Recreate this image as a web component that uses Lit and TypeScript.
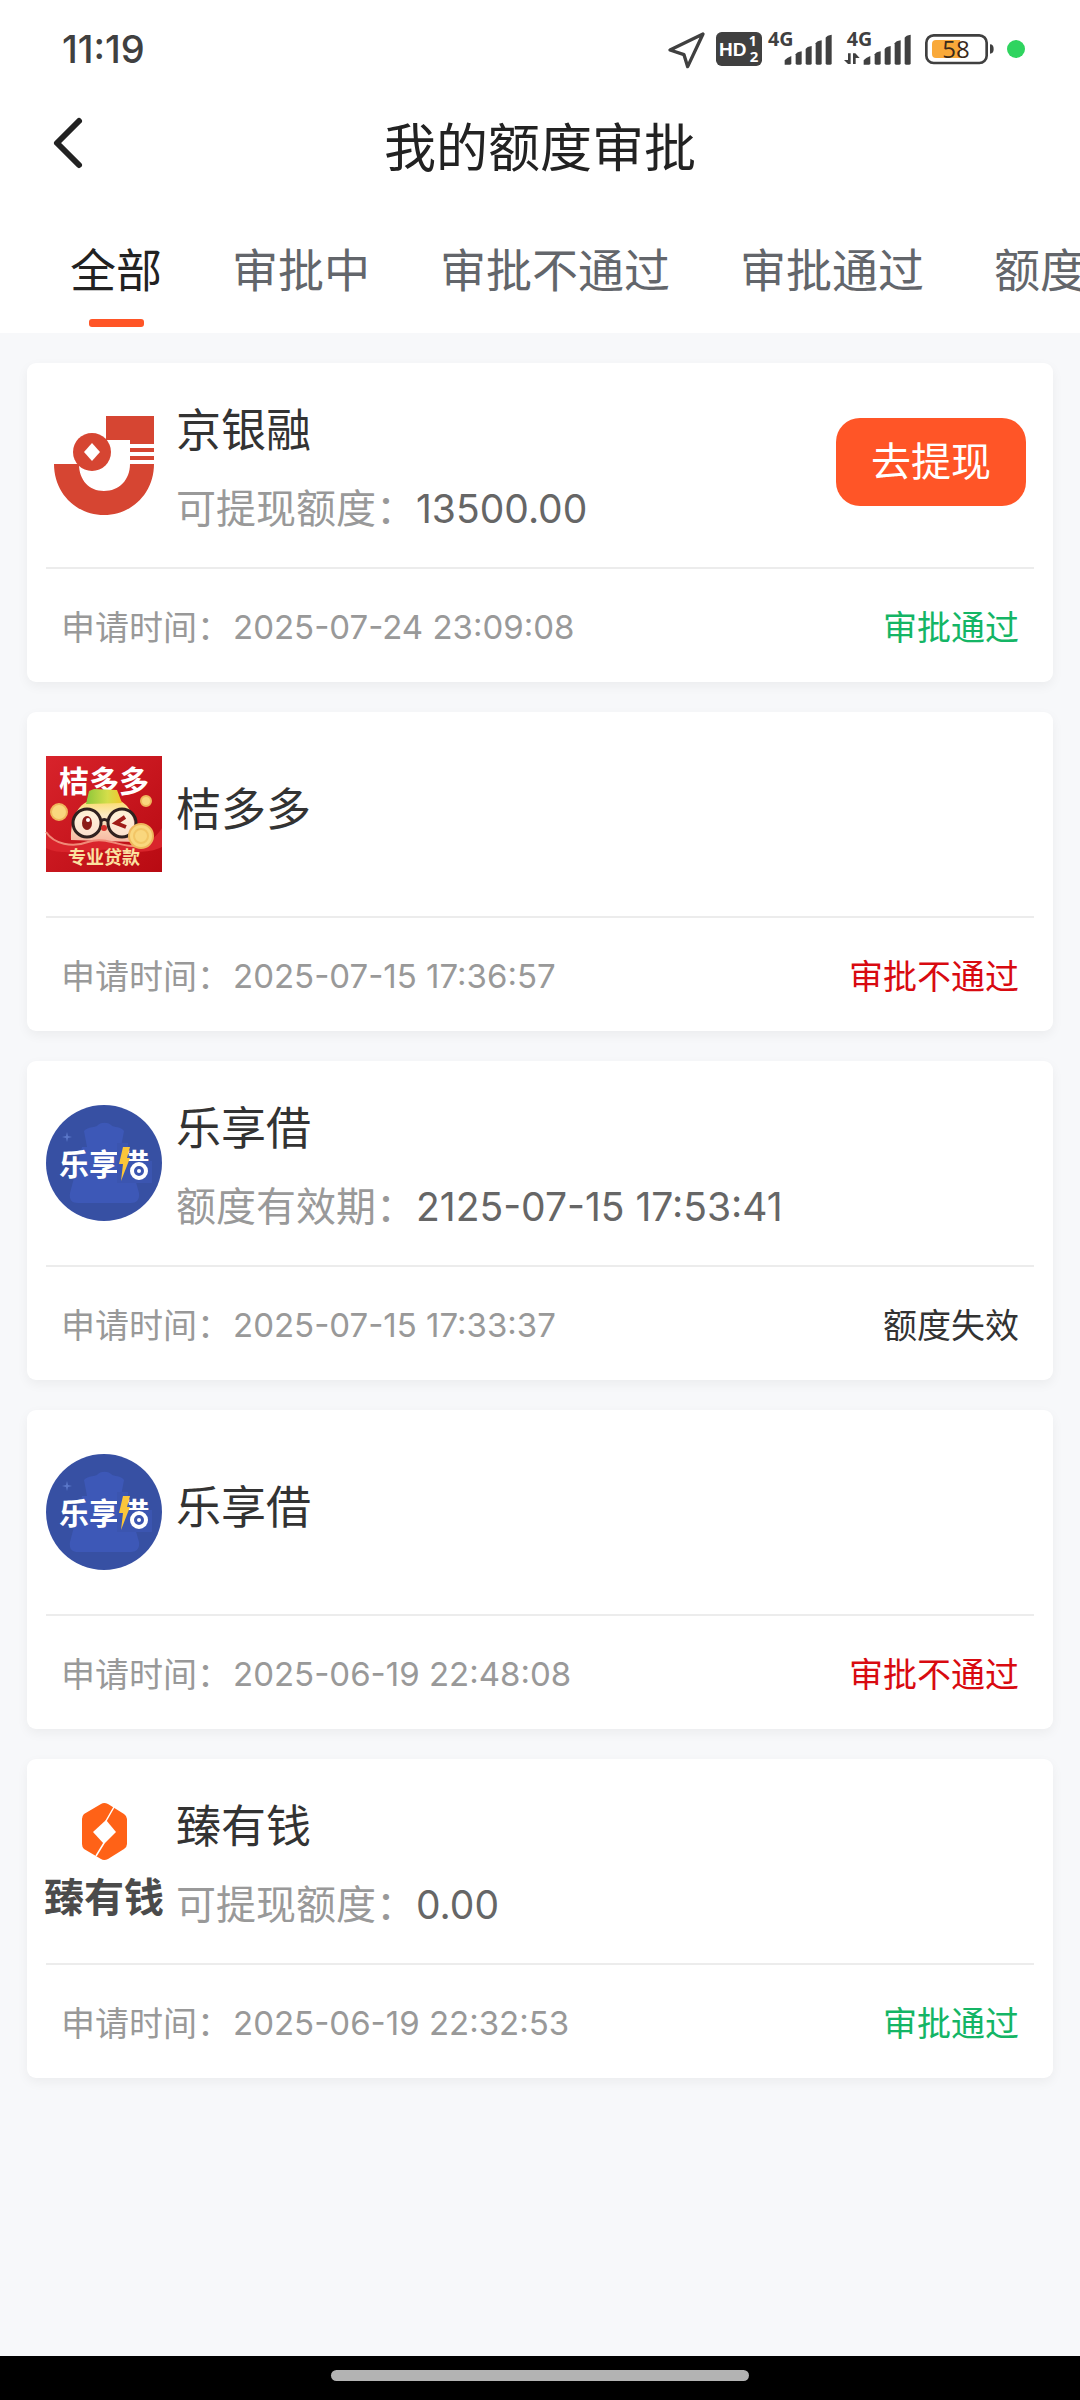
import { LitElement, html, css, svg, nothing } from "lit";
import { customElement, property, state } from "lit/decorators.js";

type Brand = "jingyinrong" | "juduoduo" | "lexiangjie" | "zhenyouqian";
type Tone = "pass" | "reject" | "expired";

interface Application {
  brand: Brand;
  name: string;
  label?: string;
  value?: string;
  appliedAt: string;
  status: string;
  tone: Tone;
  canWithdraw?: boolean;
}

const TABS = ["全部", "审批中", "审批不通过", "审批通过", "额度失效"];

const APPLICATIONS: Application[] = [
  {
    brand: "jingyinrong",
    name: "京银融",
    label: "可提现额度：",
    value: "13500.00",
    appliedAt: "2025-07-24 23:09:08",
    status: "审批通过",
    tone: "pass",
    canWithdraw: true,
  },
  {
    brand: "juduoduo",
    name: "桔多多",
    appliedAt: "2025-07-15 17:36:57",
    status: "审批不通过",
    tone: "reject",
  },
  {
    brand: "lexiangjie",
    name: "乐享借",
    label: "额度有效期：",
    value: "2125-07-15 17:53:41",
    appliedAt: "2025-07-15 17:33:37",
    status: "额度失效",
    tone: "expired",
  },
  {
    brand: "lexiangjie",
    name: "乐享借",
    appliedAt: "2025-06-19 22:48:08",
    status: "审批不通过",
    tone: "reject",
  },
  {
    brand: "zhenyouqian",
    name: "臻有钱",
    label: "可提现额度：",
    value: "0.00",
    appliedAt: "2025-06-19 22:32:53",
    status: "审批通过",
    tone: "pass",
  },
];

const LOGOS = {
  jingyinrong: svg`
    <g fill="#d64532">
      <path d="M60 9H108V37H84V33H60Z" />
      <rect x="84" y="41" width="24" height="4" />
      <rect x="84" y="49" width="24" height="4" />
      <path d="M8 57H33C33 73 43 84 58 84S84 73 84 57H108C108 86 86 108 58 108S8 86 8 57Z" />
      <circle cx="46" cy="45" r="19" />
    </g>
    <path d="M46 36L54 45L46 54L38 45Z" fill="#fff" />
  `,
  juduoduo: svg`
    <defs>
      <linearGradient id="red" x1="0" y1="0" x2="1" y2="1">
        <stop offset="0" stop-color="#d8232b" />
        <stop offset="1" stop-color="#b80a12" />
      </linearGradient>
      <linearGradient id="hat" x1="0" y1="0" x2="1" y2="0">
        <stop offset="0" stop-color="#8dc63a" />
        <stop offset="0.6" stop-color="#d4de4a" />
        <stop offset="1" stop-color="#f3c62f" />
      </linearGradient>
      <linearGradient id="face" x1="0" y1="0" x2="0" y2="1">
        <stop offset="0" stop-color="#fbdc6c" />
        <stop offset="0.35" stop-color="#fdeac4" />
        <stop offset="1" stop-color="#f6b7a2" />
      </linearGradient>
    </defs>
    <rect width="116" height="116" fill="url(#red)" />
    <text class="mark" x="13" y="36" font-size="30" fill="#fff">桔多多</text>
    <path d="M25 84C24 64 32 47 44 45H74C86 50 90 66 89 86Z" fill="url(#face)" />
    <path d="M43 35L48 33L71 34L76 47L40 48Z" fill="url(#hat)" />
    <path d="M0 76C8 88 26 92 42 86C60 80 76 92 92 90C104 88 112 78 116 72V91C96 101 70 92 54 94C34 97 10 98 0 92Z" fill="#d9252c" />
    <path d="M0 76C8 88 26 92 42 86C60 80 76 92 92 90" fill="none" stroke="#f08a78" stroke-width="2" />
    <g fill="#fff3e6" fill-opacity="0.6" stroke="#30211f" stroke-width="3">
      <circle cx="41" cy="67" r="14" />
      <circle cx="76" cy="67" r="14" />
      <path d="M55 65Q58 62 62 65" fill="none" />
    </g>
    <ellipse cx="41" cy="67" rx="5" ry="7" fill="#8c1c18" />
    <circle cx="42" cy="64" r="2" fill="#fff" />
    <path d="M79 61L70 67L80 71" fill="none" stroke="#a01c18" stroke-width="4" />
    <circle cx="58" cy="72" r="3" fill="#d6302a" />
    <g fill="#f9d77e" stroke="#efb75c" stroke-width="2">
      <circle cx="13" cy="56" r="8" />
      <circle cx="100" cy="45" r="5" />
      <circle cx="95" cy="80" r="12" />
    </g>
    <circle cx="95" cy="80" r="7" fill="none" stroke="#f2c666" stroke-width="2" />
    <text class="mark" x="22" y="108" font-size="18" fill="#fbe0a0">专业贷款</text>
  `,
  lexiangjie: svg`
    <circle cx="58" cy="58" r="58" fill="#3750a3" />
    <path d="M38 26C42 21 50 23 52 20C55 17 62 17 65 20C68 23 75 21 78 26L75 42H80L93 88C94 95 90 98 85 98H32C26 98 23 95 24 88L36 42H41Z" fill="#3d58b7" />
    <path d="M21 27L22 31L26 32L22 33L21 37L20 33L16 32L20 31Z" fill="#5b77c9" />
    <text class="mark" x="13" y="70" font-size="30" fill="#fff">乐享借</text>
    <path d="M71 38H82V56H106V78H71Z" fill="#3b55b0" />
    <circle cx="93" cy="66" r="7" fill="none" stroke="#fff" stroke-width="4" />
    <circle cx="93" cy="66" r="2" fill="#fff" />
    <path d="M77 42H84L81 53H84L75 76L77 59H73Z" fill="#fbc63a" />
  `,
  zhenyouqian: svg`
    <path d="M55 1Q58 -1 62 1L78 11Q81 13 81 16V41Q81 44 78 46L62 56Q58 58 55 56L38 46Q36 44 36 41V16Q36 13 38 11Z" fill="#ff6217" />
    <path d="M60 17L70 29L58 41L47 29Z" fill="#fff" />
    <path d="M60 18L68 4M58 40L50 53" stroke="#fff" stroke-width="1.5" />
    <text class="mark" x="-2" y="109" font-size="40" fill="#4b4b4b">臻有钱</text>
  `,
};

@customElement("status-bar")
export class StatusBar extends LitElement {
  static styles = css`
    :host {
      display: flex;
      align-items: center;
      justify-content: space-between;
      height: 98px;
      padding: 0 54px 0 62px;
      background: #fff;
      color: #404040;
    }
    .time {
      font: 500 38px/48px Inter, sans-serif;
    }
    .icons {
      display: flex;
      gap: 6px;
    }
    .icons svg {
      display: block;
      height: 50px;
      overflow: visible;
    }
    text {
      font-family: "Open Sans", "Noto Sans", sans-serif;
    }
    .hd {
      font-family: "Liberation Sans", Arial, sans-serif;
    }
  `;

  private bars(x: number) {
    return svg`
      <path d="M${x} 194V181Q${x + 6} 173 ${x + 20} 168V190Q${x + 20} 194 ${x + 16} 194Z" />
      ${[154, 138, 121, 104].map((top, i) => {
        const l = x + 33 + i * 30;
        return svg`<path d="M${l} 190V${top + 9}Q${l + 4} ${top + 2} ${l + 18} ${top}V190Q${l + 18} 194 ${l + 14} 194H${l + 4}Q${l} 194 ${l} 190Z" />`;
      })}
    `;
  }

  render() {
    return html`
      <span class="time">11:19</span>
      <div class="icons">
        <svg width="42" viewBox="84 72 126 150" aria-hidden="true">
          <path d="M189 102L90 150L132 164L143 200Z" fill="none" stroke="#404040" stroke-width="10" stroke-linejoin="round" />
        </svg>
        <svg width="46" viewBox="228 72 138 150" aria-hidden="true">
          <rect x="228" y="96" width="138" height="102" rx="17" fill="#404040" />
          <text class="hd" x="237" y="168" font-size="57" font-weight="700" fill="#fff">HD</text>
          <text x="326" y="138" font-size="42" font-weight="700" fill="#fff">1</text>
          <text x="329" y="185" font-size="45" font-weight="700" fill="#fff">2</text>
        </svg>
        <svg width="70" viewBox="384 72 210 150" fill="#404040" aria-hidden="true">
          <text x="384" y="138" font-size="59" font-weight="700">4G</text>
          ${this.bars(434)}
        </svg>
        <svg width="74" viewBox="612 72 222 150" fill="#404040" aria-hidden="true">
          <text x="620" y="138" font-size="59" font-weight="700">4G</text>
          <path d="M624 160H632V192H624L612 180H624ZM639 192V160H646L659 174H647V192Z" />
          ${this.bars(671)}
        </svg>
        <svg width="76" viewBox="852 72 228 150" aria-hidden="true">
          <rect x="859" y="106" width="181" height="83" rx="22" fill="none" stroke="#404040" stroke-width="8" />
          <path d="M888 120H960V174H888Q876 174 876 162V132Q876 120 888 120Z" fill="#f9a93a" />
          <path d="M1050 133Q1061 133 1061 147T1050 161Z" fill="#404040" />
          <text x="907" y="174" font-size="72" fill="#3a2a1c">58</text>
        </svg>
        <svg width="20" viewBox="1098 72 60 150" aria-hidden="true">
          <circle cx="1128" cy="147" r="27" fill="#2fd45f" />
        </svg>
      </div>
    `;
  }
}

@customElement("application-card")
export class ApplicationCard extends LitElement {
  @property({ attribute: false }) item!: Application;

  static styles = css`
    :host {
      display: block;
      padding: 0 19px;
      border-radius: 9px;
      background: #fff;
      box-shadow: 0 4px 12px rgba(0, 0, 0, 0.05);
    }
    .main {
      display: flex;
      align-items: center;
      gap: 14px;
      min-height: 204px;
      border-bottom: 2px solid #ececec;
    }
    .logo {
      flex: none;
      width: 116px;
      height: 116px;
      overflow: visible;
    }
    .mark {
      font-family: "Noto Sans CJK SC", sans-serif;
      font-weight: 700;
    }
    .info {
      flex: 1;
      min-width: 0;
    }
    .name {
      margin: 0 0 8px;
      color: #333;
      font-size: 45px;
      font-weight: 400;
      line-height: 80px;
    }
    .detail {
      display: flex;
      margin: 0;
      font-size: 40px;
      line-height: 60px;
    }
    .detail dt {
      color: #999;
    }
    .detail dd {
      margin: 0;
      color: #666;
      font-size: 39px;
    }
    .withdraw {
      margin: 0 8px 6px 0;
      padding: 0 35px;
      border: 0;
      border-radius: 24px;
      background: #ff5527;
      color: #fff;
      font: inherit;
      font-size: 40px;
      line-height: 88px;
    }
    .foot {
      display: flex;
      align-items: center;
      justify-content: space-between;
      padding: 4px 15px 0;
      font-size: 34px;
      line-height: 109px;
      color: #999;
    }
    .applied {
      display: flex;
      gap: 2px;
    }
    .applied time {
      font-size: 33px;
    }
    .pass {
      color: #14b565;
    }
    .reject {
      color: #d80a10;
    }
    .expired {
      color: #333;
    }
  `;

  render() {
    const { brand, name, label, value, appliedAt, status, tone, canWithdraw } = this.item;
    return html`
      <div class="main">
        <svg class="logo" viewBox="0 0 116 116" aria-hidden="true">${LOGOS[brand]}</svg>
        <div class="info">
          <h2 class="name">${name}</h2>
          ${label ? html`<dl class="detail"><dt>${label}</dt><dd>${value}</dd></dl>` : nothing}
        </div>
        ${canWithdraw ? html`<button class="withdraw" type="button">去提现</button>` : nothing}
      </div>
      <div class="foot">
        <span class="applied">申请时间：<time>${appliedAt}</time></span>
        <span class=${tone}>${status}</span>
      </div>
    `;
  }
}

@customElement("app-root")
export class AppRoot extends LitElement {
  @state() private active = 0;

  static styles = css`
    :host {
      display: flex;
      flex-direction: column;
      min-height: 100vh;
      background: #f7f8fa;
      color: #222;
      font-family: Inter, "Noto Sans CJK SC", sans-serif;
    }
    .nav {
      display: grid;
      grid-template-columns: 100px 1fr 100px;
      align-items: center;
      height: 100px;
      background: #fff;
    }
    .back {
      display: flex;
      padding: 0 0 10px 51px;
      border: 0;
      background: none;
    }
    .title {
      margin: 0;
      padding-top: 2px;
      text-align: center;
      font-size: 52px;
      font-weight: 400;
      line-height: 76px;
    }
    .tabs {
      display: flex;
      gap: 70px;
      padding: 0 70px;
      overflow: hidden;
      background: #fff;
    }
    .tab {
      display: flex;
      flex: none;
      flex-direction: column;
      align-items: center;
      gap: 19px;
      padding: 42px 0 6px;
      border: 0;
      background: none;
      color: #63666b;
      font: inherit;
      font-size: 46px;
      line-height: 60px;
      white-space: nowrap;
    }
    .tab::after {
      content: "";
      width: 55px;
      height: 8px;
      border-radius: 3px;
    }
    .tab[aria-selected="true"] {
      color: #222;
    }
    .tab[aria-selected="true"]::after {
      background: #ff5527;
    }
    .list {
      display: flex;
      flex: 1;
      flex-direction: column;
      gap: 30px;
      padding: 30px 27px;
    }
    .home {
      display: flex;
      justify-content: center;
      padding: 14px 0 19px;
      background: #000;
    }
    .home span {
      width: 418px;
      height: 11px;
      border-radius: 6px;
      background: #b3b3b3;
    }
  `;

  render() {
    return html`
      <status-bar></status-bar>
      <header class="nav">
        <button class="back" type="button" aria-label="返回">
          <svg width="34" height="54" viewBox="0 0 34 54" fill="none" stroke="#222" stroke-width="6" stroke-linecap="round" stroke-linejoin="round">
            <path d="M28 5L6 27L28 49" />
          </svg>
        </button>
        <h1 class="title">我的额度审批</h1>
      </header>
      <div class="tabs" role="tablist">
        ${TABS.map(
          (tab, i) => html`
            <button class="tab" type="button" role="tab" aria-selected=${i === this.active} @click=${() => (this.active = i)}>${tab}</button>
          `
        )}
      </div>
      <main class="list">
        ${APPLICATIONS.map((item) => html`<application-card .item=${item}></application-card>`)}
      </main>
      <div class="home"><span></span></div>
    `;
  }
}
